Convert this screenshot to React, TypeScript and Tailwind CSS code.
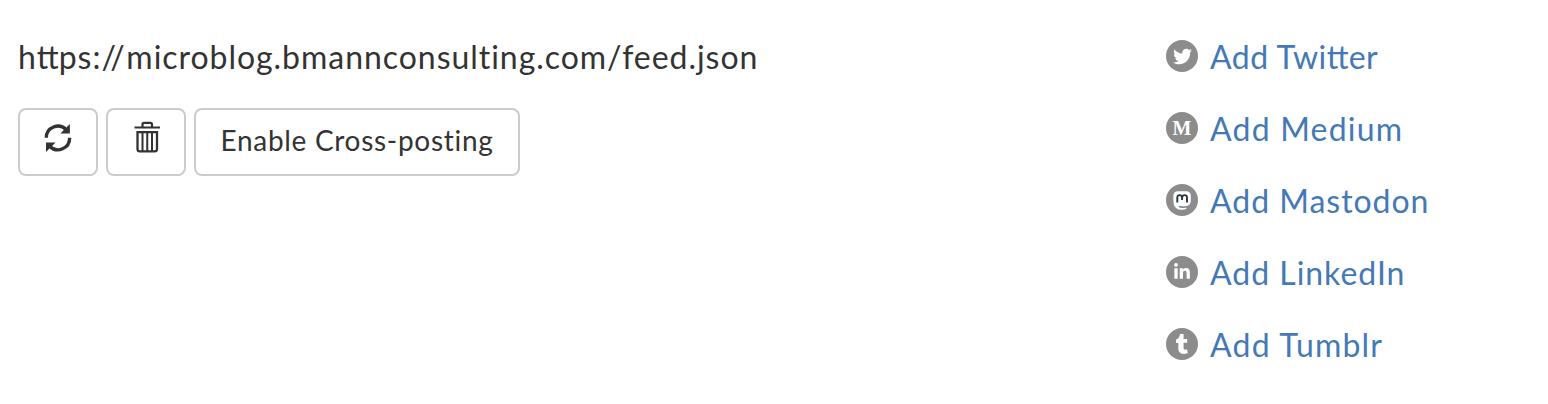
import type { ReactNode } from 'react';
import { FaLinkedinIn, FaTumblr, FaTwitter } from 'react-icons/fa';

const ligature = <span className="tracking-normal">tt</span>;

function RefreshIcon() {
  return (
    <svg width="28" height="30" viewBox="0 0 28 30" className="mt-px shrink-0">
      <g fill="none" stroke="#333" strokeWidth="3.4">
        <path d="M2.3 14.8A11.6 11.6 0 0 1 22.2 6.6" />
        <path d="M25.6 14.8A11.6 11.6 0 0 1 5.7 23.2" />
      </g>
      <path d="M25.9 .9V10.5H16.3Z" fill="#333" />
      <path d="M2 28.9V19.6H11.6Z" fill="#333" />
    </svg>
  );
}

function TrashIcon() {
  return (
    <svg width="28" height="32" viewBox="0 0 28 32" className="shrink-0" fill="none" stroke="#333">
      <path d="M1.5 6.5H27" strokeWidth="2" />
      <path d="M9.5 6V3.2Q9.5 1.8 11 1.8H17.5Q19 1.8 19 3.2V6" strokeWidth="2.2" />
      <path d="M4.5 11.2H24V28Q24 30.4 21.6 30.4H6.9Q4.5 30.4 4.5 28Z" strokeWidth="2.3" />
      <path d="M9.5 11V30M14.25 11V30M19 11V30" strokeWidth="2" />
    </svg>
  );
}

function MastodonIcon() {
  return (
    <svg width="32" height="32" viewBox="0 0 32 32" fill="none">
      <path
        d="M12 7.2H20.2Q24.8 7.2 24.8 11.8V16.5Q24.8 21.6 20 22.1Q16 22.6 12.5 21.8Q12.6 24 15.8 24.1Q18.2 24.1 20.3 23.6V25.1Q18 26 15 25.8Q7.4 25.5 7.4 17V11.8Q7.4 7.2 12 7.2Z"
        fill="#fff"
      />
      <path
        d="M11.3 18.4V13.5Q11.3 11.1 13.6 11.1Q16.1 11.1 16.1 13.7V16.1M16.1 13.7Q16.1 11.1 18.6 11.1Q21 11.1 21 13.5V18.4"
        stroke="#2b3540"
        strokeWidth="1.9"
      />
    </svg>
  );
}

function IconButton({ label, children }: { label: string; children: ReactNode }) {
  return (
    <button aria-label={label} className="flex h-[68px] w-20 items-start justify-center rounded-[8px] border-2 border-[#ccc] bg-white pt-[12px]">
      {children}
    </button>
  );
}

const services: { id: string; icon: ReactNode; label: ReactNode; spacing: string }[] = [
  { id: 'twitter', icon: <FaTwitter size={19} />, label: <>Add Twi{ligature}er</>, spacing: 'tracking-[0.5px]' },
  {
    id: 'medium',
    icon: <span className="font-['Liberation_Serif',serif] text-[20px] leading-none font-bold">M</span>,
    label: 'Add Medium',
    spacing: 'tracking-[1.2px]',
  },
  { id: 'mastodon', icon: <MastodonIcon />, label: 'Add Mastodon', spacing: 'tracking-[0.97px]' },
  { id: 'linkedin', icon: <FaLinkedinIn size={18} />, label: 'Add LinkedIn', spacing: 'tracking-[0.97px]' },
  { id: 'tumblr', icon: <FaTumblr size={20} />, label: 'Add Tumblr', spacing: 'tracking-[1.2px]' },
];

export default function App() {
  return (
    <main className="flex h-[404px] w-[1548px] bg-white pt-[36px] pl-[18px] font-['Lato',sans-serif] text-[#333]">
      <section className="w-[1148px]">
        <p className="h-[72px] text-[32px] leading-[42px] tracking-[0.96px] whitespace-nowrap">
          h{ligature}ps:<span className="tracking-[1.6px]">//</span>microblog.bmannconsulting.com/feed.json
        </p>
        <div className="flex gap-2">
          <IconButton label="Refresh"><RefreshIcon /></IconButton>
          <IconButton label="Delete"><span className="-mt-px pl-[2px]"><TrashIcon /></span></IconButton>
          <button className="flex h-[68px] w-[326px] justify-center rounded-[8px] border-2 border-[#ccc] bg-white text-[28px] leading-[60px] tracking-[0.7px] whitespace-nowrap">
            Enable Cross-posting
          </button>
        </div>
      </section>
      <ul className="flex flex-col">
        {services.map(({ id, icon, label, spacing }) => (
          <li key={id} className="flex h-[72px] items-start gap-3">
            <span className="mt-1 flex size-8 shrink-0 items-center justify-center rounded-full bg-[#8c8c8c] text-white">{icon}</span>
            <a className={`text-[32px] leading-[42px] whitespace-nowrap text-[#4479b5] ${spacing}`}>{label}</a>
          </li>
        ))}
      </ul>
    </main>
  );
}
